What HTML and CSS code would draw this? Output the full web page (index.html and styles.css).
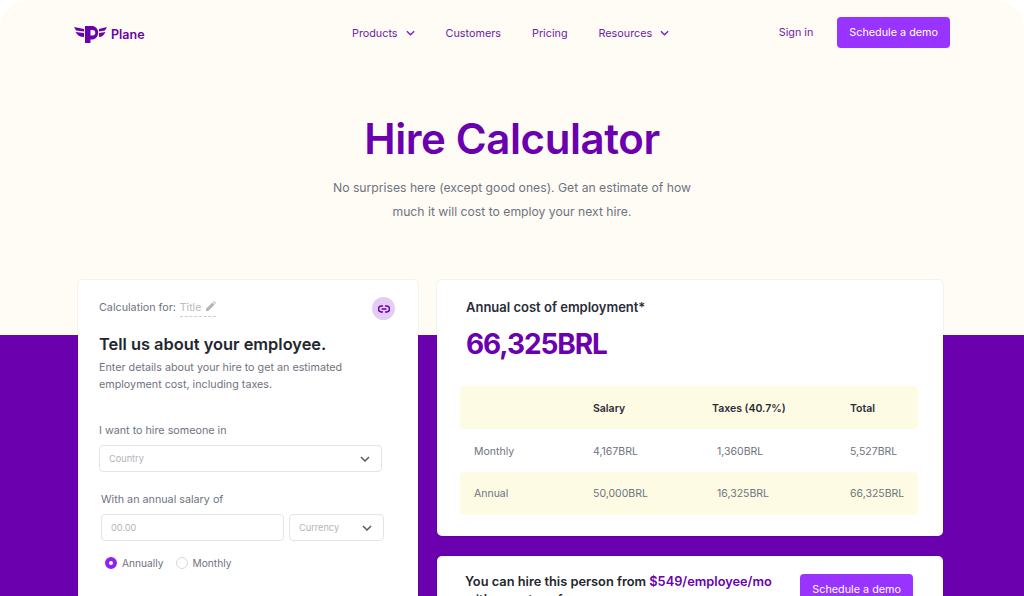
FILE: index.html
```html
<!DOCTYPE html>
<html lang="en">
<head>
    <meta charset="UTF-8">
    <title>Hire Calculator</title>
    <link rel="stylesheet" href="styles.css">
</head>
<body>
<div class="page">
    <header class="top">
        <a class="logo">
            <svg width="33" height="17" viewBox="0 0 33 17">
                <path fill="#6a00ae" d="M0 1L10 3V5.500L2 4.500zM1.500 6L10 7V11C6 11 3 9 1.500 6z"/>
                <path fill="#6a00ae" d="M33 1L25 3V5.500L31 4.500zM31.500 6L25 7V11C28 11 30 9 31.500 6z"/>
                <path fill="#6a00ae" fill-rule="evenodd" d="M11 0H19A7 7 0 0 1 19 13.500H16.500V17H11zM16.500 4V9.500H18.500A2.750 2.750 0 0 0 18.500 4z"/>
            </svg>
            <span>Plane</span>
        </a>
        <nav class="nav">
            <a class="nav-link">Products <svg class="chev" width="9" height="6" viewBox="0 0 10 6"><path d="M1 1l4 4 4-4"/></svg></a>
            <a class="nav-link">Customers</a>
            <a class="nav-link">Pricing</a>
            <a class="nav-link">Resources <svg class="chev" width="9" height="6" viewBox="0 0 10 6"><path d="M1 1l4 4 4-4"/></svg></a>
        </nav>
        <div class="top-right">
            <a class="nav-link">Sign in</a>
            <a class="btn">Schedule a demo</a>
        </div>
    </header>

    <section class="hero">
        <h1>Hire Calculator</h1>
        <p>No surprises here (except good ones). Get an estimate of how much it will cost to employ your next hire.</p>
    </section>

    <main class="cols">
        <section class="card form-card">
            <div class="calc-row">
                <span>Calculation for:</span>
                <span class="title-field">Title
                    <svg width="10" height="10" viewBox="0 0 11 11"><path fill="#b4b4b9" d="M0 11V8.600L7 1.600l2.400 2.400-7 7zM7.800.8l.8-.8 2.400 2.400-.8.8z"/></svg>
                </span>
                <span class="link-btn">
                    <svg width="12" height="8" viewBox="0 0 12 8"><path fill="none" stroke="#6a00ae" stroke-width="1.500" d="M5 1H3.500a3 3 0 0 0 0 6H5M7 1h1.500a3 3 0 0 1 0 6H7M3.500 4h5"/></svg>
                </span>
            </div>
            <h2>Tell us about your employee.</h2>
            <p class="intro">Enter details about your hire to get an estimated employment cost, including taxes.</p>

            <label class="field-label">I want to hire someone in</label>
            <div class="box country">Country <svg class="chev dark" width="10" height="6" viewBox="0 0 10 6"><path d="M1 1l4 4 4-4"/></svg></div>

            <label class="field-label salary-label">With an annual salary of</label>
            <div class="salary-row">
                <div class="box amount">00.00</div>
                <div class="box currency">Currency <svg class="chev dark" width="10" height="6" viewBox="0 0 10 6"><path d="M1 1l4 4 4-4"/></svg></div>
            </div>

            <div class="radios">
                <span class="radio on"></span><span class="radio-label">Annually</span>
                <span class="radio"></span><span class="radio-label">Monthly</span>
            </div>
        </section>

        <div class="right">
            <section class="card cost-card">
                <div class="cost-title">Annual cost of employment*</div>
                <div class="cost-total">66,325BRL</div>
                <div class="tbl">
                    <div class="tr head">
                        <span></span><span>Salary</span><span class="taxes">Taxes (40.7%)</span><span>Total</span>
                    </div>
                    <div class="tr monthly">
                        <span>Monthly</span><span>4,167BRL</span><span>1,360BRL</span><span>5,527BRL</span>
                    </div>
                    <div class="tr shade">
                        <span>Annual</span><span>50,000BRL</span><span>16,325BRL</span><span>66,325BRL</span>
                    </div>
                </div>
            </section>
            <section class="card hire-card">
                <p>You can hire this person from <b>$549/employee/mo</b> with no set-up fees.</p>
                <a class="btn">Schedule a demo</a>
            </section>
        </div>
    </main>
</div>
</body>
</html>
```

FILE: styles.css
```css
html, body {
    margin: 0;
    height: 596px;
    overflow: hidden;
    background: #fff;
}
body {
    font-family: Inter, sans-serif;
    color: #6f7380;
}
.page {
    height: 596px;
    overflow: hidden;
    border-radius: 28px 28px 0 0;
    background: linear-gradient(#fffcf6 335px, #6a00ae 335px);
}

/* header */
.top {
    display: flex;
    align-items: center;
    height: 65px;
    padding: 0 74px;
}
.logo {
    display: flex;
    align-items: center;
    gap: 4px;
    width: 278px;
    margin-top: 4px;
    color: #6a00ae;
    font-size: 12.500px;
    font-weight: 600;
}
.nav {
    display: flex;
    align-items: center;
    gap: 31px;
    margin-top: 2px;
}
.nav-link {
    color: #6a22a8;
    font-size: 10.800px;
    font-weight: 400;
    white-space: nowrap;
}
.nav-link svg {
    margin-left: 5px;
    vertical-align: 1px;
}
.chev path {
    fill: none;
    stroke: #7a1fc4;
    stroke-width: 1.500;
}
.chev.dark path {
    stroke: #555a66;
}
.top-right {
    display: flex;
    align-items: center;
    gap: 24px;
    margin-left: auto;
}
.btn {
    background: #9933ff;
    color: #fff;
    font-size: 10.800px;
    font-weight: 400;
    padding: 0 12px;
    height: 31px;
    line-height: 32px;
    border-radius: 4px;
    white-space: nowrap;
}

/* hero */
.hero {
    text-align: center;
    height: 215px;
}
.hero h1 {
    margin: 0;
    padding-top: 48px;
    color: #6a00ae;
    font-size: 42px;
    line-height: 52px;
    font-weight: 600;
    letter-spacing: -0.400px;
}
.hero p {
    width: 380px;
    margin: 11px auto 0;
    font-size: 12.200px;
    line-height: 24px;
}

/* cards */
.cols {
    display: flex;
    align-items: flex-start;
    gap: 19px;
    padding-left: 78px;
}
.card {
    background: #fff;
    border-radius: 5px;
    box-sizing: border-box;
    box-shadow: 0 0 0 1px rgba(0,0,0,0.04);
}
.form-card {
    width: 340px;
    height: 400px;
    padding: 15px 23px 15px 21px;
}
.calc-row {
    display: flex;
    align-items: center;
    gap: 4px;
    height: 25px;
    font-size: 10.750px;
}
.title-field {
    color: #b9b9be;
    font-size: 10.500px;
    border-bottom: 1px dashed #ccc;
    padding-bottom: 2px;
    margin-top: 2px;
}
.title-field svg {
    margin-left: 2px;
}
.link-btn {
    display: flex;
    align-items: center;
    justify-content: center;
    width: 23px;
    height: 23px;
    margin: 2px 0 0 auto;
    border-radius: 50%;
    background: #e3cdf5;
}
.form-card h2 {
    margin: 12px 0 0;
    color: #23262f;
    font-size: 16.400px;
    line-height: 24px;
    font-weight: 600;
}
.intro {
    margin: 3px 0 0;
    font-size: 10.750px;
    line-height: 17px;
}
.field-label {
    display: block;
    margin-top: 30px;
    font-size: 10.750px;
    line-height: 16px;
}
.box {
    display: flex;
    align-items: center;
    justify-content: space-between;
    box-sizing: border-box;
    height: 27px;
    padding: 0 11px 0 9px;
    border: 1px solid #e4e4e6;
    border-radius: 4px;
    color: #b4b4b9;
    font-size: 9.200px;
}
.country {
    width: 283px;
    margin-top: 6px;
}
.salary-label {
    margin: 20px 0 0 2px;
}
.salary-row {
    display: flex;
    gap: 5px;
    margin: 6px 0 0 2px;
}
.amount {
    width: 183px;
}
.currency {
    width: 95px;
}
.radios {
    display: flex;
    align-items: center;
    margin: 16px 0 0 6px;
    font-size: 10.200px;
}
.radio {
    box-sizing: border-box;
    width: 12px;
    height: 12px;
    border: 1px solid #d8d8dc;
    border-radius: 50%;
}
.radio.on {
    border: 4px solid #9022ee;
}
.radio-label {
    margin: 0 12px 0 5px;
}

.right {
    display: flex;
    flex-direction: column;
    gap: 20px;
    width: 506px;
}
.cost-card {
    height: 256px;
    padding: 18px 23px;
}
.cost-title {
    margin-left: 6px;
    color: #2b2d38;
    font-size: 13px;
    line-height: 18px;
    font-weight: 600;
}
.cost-total {
    margin: 9px 0 0 6px;
    color: #6a00ae;
    font-size: 28px;
    line-height: 38px;
    font-weight: 700;
    letter-spacing: -1.100px;
}
.tbl {
    margin-top: 23px;
    width: 458px;
    font-size: 10.500px;
}
.tr {
    display: grid;
    grid-template-columns: 119px 124px 133px 1fr;
    align-items: center;
    height: 43px;
    padding-left: 14px;
    border-radius: 4px;
}
.tr.head {
    background: #fefbe4;
    color: #2b2d38;
    font-weight: 600;
    padding-top: 1px;
    box-sizing: border-box;
}
.tr.head .taxes {
    margin-left: -5px;
    white-space: nowrap;
}
.tr.monthly {
    padding-top: 1px;
    box-sizing: border-box;
}
.tr.shade {
    background: #fefbe4;
}
.hire-card {
    display: flex;
    justify-content: space-between;
    align-items: flex-start;
    height: 120px;
    padding: 17px 30px 0 28px;
}
.hire-card p {
    width: 320px;
    margin: 0;
    color: #23262f;
    font-size: 12.800px;
    line-height: 18px;
    font-weight: 600;
}
.hire-card b {
    color: #6a00ae;
    font-weight: 600;
}
.hire-card .btn {
    margin-top: 1px;
}
```
